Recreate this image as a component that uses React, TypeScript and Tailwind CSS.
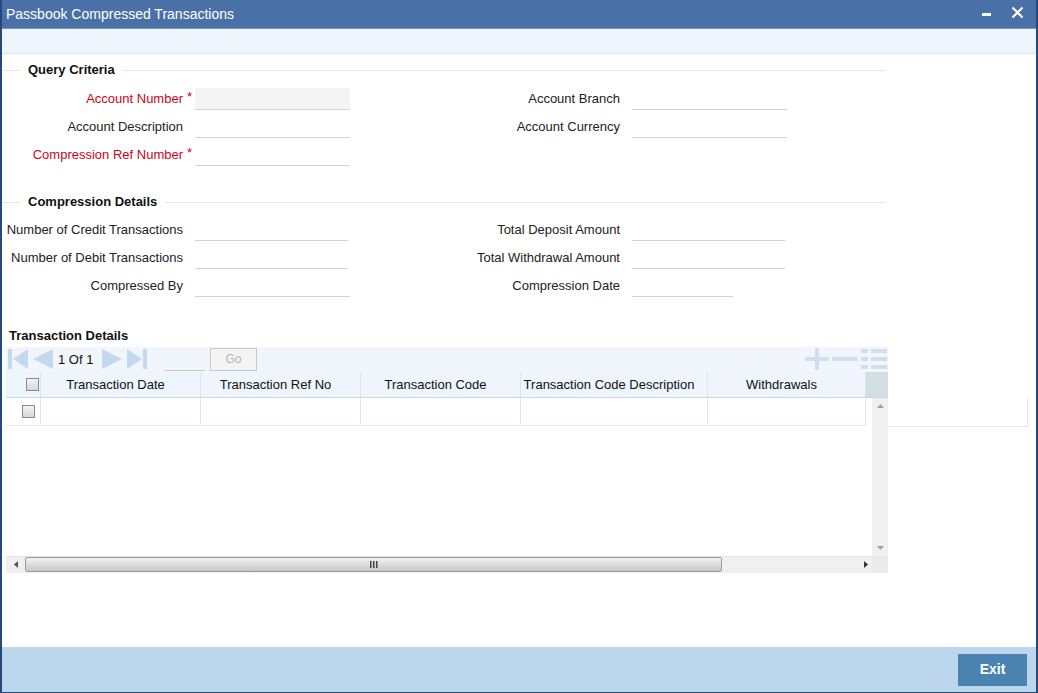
import React from "react";

type Field = { label: string; required?: boolean; shaded?: boolean; width?: number };

const font = { fontFamily: '"Liberation Sans", Arial, sans-serif' };

function Input({ width = 155, shaded }: { width?: number; shaded?: boolean }) {
  return (
    <div
      className={`h-[22px] border-b border-[#d3d3d3] ${shaded ? "bg-[#f4f4f4]" : ""}`}
      style={{ width }}
    />
  );
}

function FormRow({ left, right }: { left: Field; right?: Field }) {
  return (
    <div className="flex h-[28px] items-center">
      <div
        className={`w-[181px] shrink-0 text-right text-[13px] ${
          left.required ? "text-[#d0021b]" : "text-[#222]"
        }`}
      >
        {left.label}
      </div>
      <div className="w-[12px] shrink-0 self-start pt-[2px] pl-[4px] text-[13px] text-[#d0021b]">
        {left.required ? "*" : ""}
      </div>
      <div className="w-[175px] shrink-0">
        <Input width={left.width} shaded={left.shaded} />
      </div>
      <div className="w-[250px] shrink-0 text-right text-[13px] text-[#222]">
        {right?.label ?? ""}
      </div>
      <div className="w-[12px] shrink-0" />
      {right && <Input width={right.width} />}
    </div>
  );
}

function Legend({ title }: { title: string }) {
  return (
    <div className="flex h-[16px] w-[884px] items-center">
      <div className="h-px w-[18px] bg-[#e6e6e6]" />
      <div className="px-[8px] text-[13px] font-bold text-[#111]">{title}</div>
      <div className="h-px flex-1 bg-[#e6e6e6]" />
    </div>
  );
}

function Checkbox() {
  return (
    <div className="h-[13px] w-[13px] border border-[#8a8a8a] bg-gradient-to-b from-[#f4f4f4] to-[#d6d6d6]" />
  );
}

const columns = [
  { label: "Transaction Date", w: 160 },
  { label: "Transaction Ref No", w: 160 },
  { label: "Transaction Code", w: 160 },
  { label: "Transaction Code Description", w: 187 },
  { label: "Withdrawals", w: 158 },
];

export default function App() {
  return (
    <div
      className="flex h-[693px] w-[1038px] flex-col overflow-hidden border-x-2 border-b border-[#25497a] bg-white"
      style={font}
    >
      {/* title bar */}
      <div className="flex h-[28px] shrink-0 items-center bg-[#4a71a7] pl-[4px] pr-[12px] text-white">
        <span className="text-[14px]">Passbook Compressed Transactions</span>
        <div className="ml-auto flex items-center gap-[20px]">
          <div className="h-[3px] w-[9px] bg-white" />
          <svg width="13" height="13" viewBox="0 0 13 13" className="mb-[4px]">
            <path d="M1.5 1.5 L11.5 11.5 M11.5 1.5 L1.5 11.5" stroke="white" strokeWidth="2.2" />
          </svg>
        </div>
      </div>
      <div className="h-px shrink-0 bg-[#7c97b8]" />
      <div className="h-[25px] shrink-0 border-b border-[#e0e6ee] bg-[#eef5fd]" />

      {/* body */}
      <div className="flex-1">
        <div className="mt-[8px]">
          <Legend title="Query Criteria" />
          <div className="mt-[7px]">
            <FormRow
              left={{ label: "Account Number", required: true, shaded: true }}
              right={{ label: "Account Branch" }}
            />
            <FormRow
              left={{ label: "Account Description" }}
              right={{ label: "Account Currency" }}
            />
            <FormRow left={{ label: "Compression Ref Number", required: true }} />
          </div>
        </div>

        <div className="mt-[25px]">
          <Legend title="Compression Details" />
          <div className="mt-[6px]">
            <FormRow
              left={{ label: "Number of Credit Transactions", width: 153 }}
              right={{ label: "Total Deposit Amount", width: 153 }}
            />
            <FormRow
              left={{ label: "Number of Debit Transactions", width: 153 }}
              right={{ label: "Total Withdrawal Amount", width: 153 }}
            />
            <FormRow
              left={{ label: "Compressed By", width: 155 }}
              right={{ label: "Compression Date", width: 101 }}
            />
          </div>
        </div>

        <div className="mt-[26px] pl-[7px] text-[13px] font-bold text-[#111]">
          Transaction Details
        </div>

        {/* grid */}
        <div className="ml-[4px] mt-[1px] w-[1026px]">
          <div className="flex h-[25px] w-[882px] items-center bg-[#f1f6fd] text-[13px] text-[#111]">
            <svg width="145" height="22" viewBox="0 0 145 22" className="shrink-0">
              <g fill="#c5d9ee">
                <rect x="2" y="1" width="4" height="20" />
                <path d="M22 1 L22 21 L7 11 Z" />
                <path d="M47 1 L47 21 L27 11 Z" />
                <path d="M96 1 L96 21 L116 11 Z" />
                <path d="M121 1 L121 21 L136 11 Z" />
                <rect x="137" y="1" width="4" height="20" />
              </g>
              <text x="52" y="16" fontSize="13" fill="#111" fontFamily="Liberation Sans, Arial, sans-serif">
                1 Of 1
              </text>
            </svg>
            <div className="ml-[13px] mt-[8px] h-[16px] w-[41px] border-b border-[#c8c8c8]" />
            <div className="ml-[5px] flex h-[23px] w-[47px] items-center justify-center border border-[#c9c9c9] bg-[#f4f4f4] text-[12px] text-[#b5b5b5]">
              Go
            </div>
            <svg width="84" height="22" viewBox="0 0 84 22" className="ml-auto shrink-0">
              <g fill="#cfdff0">
                <rect x="1" y="9" width="24" height="4" />
                <rect x="11" y="0" width="4" height="22" />
                <rect x="28" y="9" width="26" height="4" />
                <rect x="57" y="1" width="7" height="4" />
                <rect x="67" y="1" width="16" height="4" />
                <rect x="57" y="9" width="7" height="4" />
                <rect x="67" y="9" width="16" height="4" />
                <rect x="57" y="17" width="7" height="4" />
                <rect x="67" y="17" width="16" height="4" />
              </g>
            </svg>
          </div>

          {/* header */}
          <div className="flex h-[26px] w-[882px] border-b border-[#c9d7e4] bg-[#eef5fd] text-[13px] text-[#111]">
            <div className="flex w-[35px] shrink-0 items-center justify-end border-r border-[#dde6ef] pr-[1px]">
              <Checkbox />
            </div>
            {columns.map((c) => (
              <div
                key={c.label}
                className="flex shrink-0 items-center justify-center border-r border-[#dde6ef] pr-[10px] pt-[1px]"
                style={{ width: c.w }}
              >
                {c.label}
              </div>
            ))}
            <div className="flex-1 bg-[#d3dee2]" />
          </div>

          {/* body */}
          <div className="flex w-[1026px]">
            <div className="flex w-[860px] shrink-0 flex-col">
              <div className="flex h-[28px] border-b border-[#f3e6df] text-[13px]">
                <div className="flex w-[35px] shrink-0 items-center justify-end border-r border-[#dde6ef] pr-[5px]">
                  <Checkbox />
                </div>
                {columns.map((c) => (
                  <div
                    key={c.label}
                    className="shrink-0 border-r border-[#dde6ef]"
                    style={{ width: c.w }}
                  />
                ))}
              </div>
            </div>
            <div className="ml-[6px] flex h-[158px] w-[16px] shrink-0 flex-col items-center justify-between bg-[#f0f0f0] py-[6px]">
              <svg width="7" height="4" viewBox="0 0 7 4">
                <path d="M0 4 L3.5 0 L7 4 Z" fill="#a0a0a0" />
              </svg>
              <svg width="7" height="4" viewBox="0 0 7 4">
                <path d="M0 0 L3.5 4 L7 0 Z" fill="#a0a0a0" />
              </svg>
            </div>
            <div className="h-[29px] w-[140px] shrink-0 border-b border-r border-[#ece4de]" />
          </div>

          {/* horizontal scrollbar */}
          <div className="flex h-[17px] w-[882px] items-center border-t border-[#e4e4e4] bg-[#f0f0f0]">
            <div className="flex w-[19px] shrink-0 justify-center">
              <svg width="4" height="7" viewBox="0 0 4 7">
                <path d="M4 0 L0 3.5 L4 7 Z" fill="#555" />
              </svg>
            </div>
            <div className="flex h-[15px] w-[697px] shrink-0 items-center justify-center rounded-[2px] border border-[#9a9a9a] bg-gradient-to-b from-[#f2f2f2] via-[#dcdcdc] to-[#c8c8c8]">
              <svg width="8" height="7" viewBox="0 0 8 7">
                <g fill="#444">
                  <rect x="0" y="0" width="1.5" height="7" />
                  <rect x="3" y="0" width="1.5" height="7" />
                  <rect x="6" y="0" width="1.5" height="7" />
                </g>
              </svg>
            </div>
            <div className="flex w-[150px] shrink-0 justify-end pr-[4px]">
              <svg width="4" height="7" viewBox="0 0 4 7">
                <path d="M0 0 L4 3.5 L0 7 Z" fill="#333" />
              </svg>
            </div>
            <div className="h-[17px] flex-1 bg-[#ebebeb]" />
          </div>
        </div>
      </div>

      {/* footer */}
      <div className="flex h-[45px] shrink-0 items-center justify-end bg-[#bcd7ed] pr-[9px]">
        <button className="flex h-[32px] w-[69px] items-center justify-center bg-[#4a82b1] text-[14px] font-bold text-white">
          Exit
        </button>
      </div>
    </div>
  );
}
